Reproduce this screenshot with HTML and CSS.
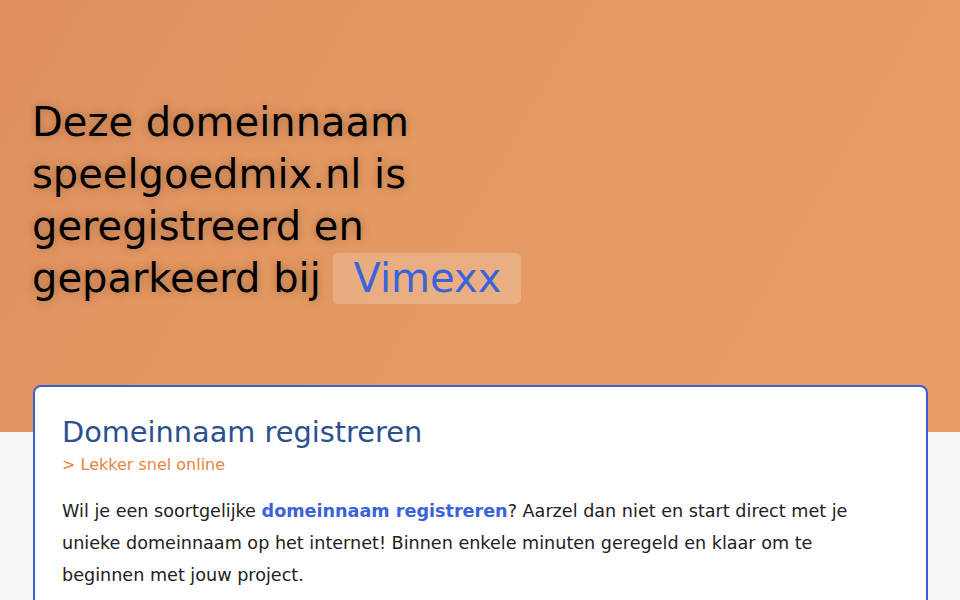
FILE: index.html
```html
<!DOCTYPE html>
<html lang="nl">
<head>
<meta charset="utf-8">
<title>speelgoedmix.nl</title>
<link rel="stylesheet" href="styles.css">
</head>
<body>
<header class="hero">
  <h1 class="hero-title">Deze domeinnaam<br>speelgoedmix.nl is<br>geregistreerd en<br>geparkeerd bij <span class="brand">Vimexx</span></h1>
</header>
<main class="content">
  <section class="card">
    <h2 class="card-title">Domeinnaam registreren</h2>
    <p class="card-sub">&gt; Lekker snel online</p>
    <p class="card-text">Wil je een soortgelijke <a class="link" href="#">domeinnaam registreren</a>? Aarzel dan niet en start direct met je unieke domeinnaam op het internet! Binnen enkele minuten geregeld en klaar om te beginnen met jouw project.</p>
  </section>
</main>
</body>
</html>
```
FILE: styles.css
```css
html, body {
  margin: 0;
  padding: 0;
}
body {
  font-family: "DejaVu Sans", sans-serif;
  background: #f7f8fa;
  color: #222;
}
.hero {
  height: 432px;
  box-sizing: border-box;
  padding: 96px 32px 0;
  background: linear-gradient(120deg, #e0915e 0%, #e49a62 50%, #e69c63 100%);
}
.hero-title {
  margin: 0;
  font-size: 40px;
  font-weight: normal;
  line-height: 52px;
  color: #000;
  text-shadow: 0 0 10px rgba(0, 0, 0, 0.28);
}
.brand {
  display: inline-block;
  line-height: 51px;
  padding: 0 20px;
  border-radius: 5px;
  background: rgba(255, 255, 255, 0.2);
  color: #3a63db;
  text-shadow: none;
}
.content {
  padding: 0 32px 0 33px;
  margin-top: -47px;
}
.card {
  background: #fff;
  border: 2px solid #3b60d4;
  border-radius: 8px;
  padding: 28px 28px 20px 27px;
  min-height: 300px;
}
.card-title {
  margin: 0;
  font-size: 28.8px;
  font-weight: normal;
  line-height: 35px;
  color: #2a5090;
}
.card-sub {
  margin: 3px 0 0;
  font-size: 16px;
  line-height: 24px;
  color: #e8843f;
}
.card-text {
  margin: 18px 0 0;
  font-size: 17.6px;
  line-height: 32px;
  color: #222;
}
.link {
  color: #3a63db;
  font-weight: bold;
  text-decoration: none;
}
```
